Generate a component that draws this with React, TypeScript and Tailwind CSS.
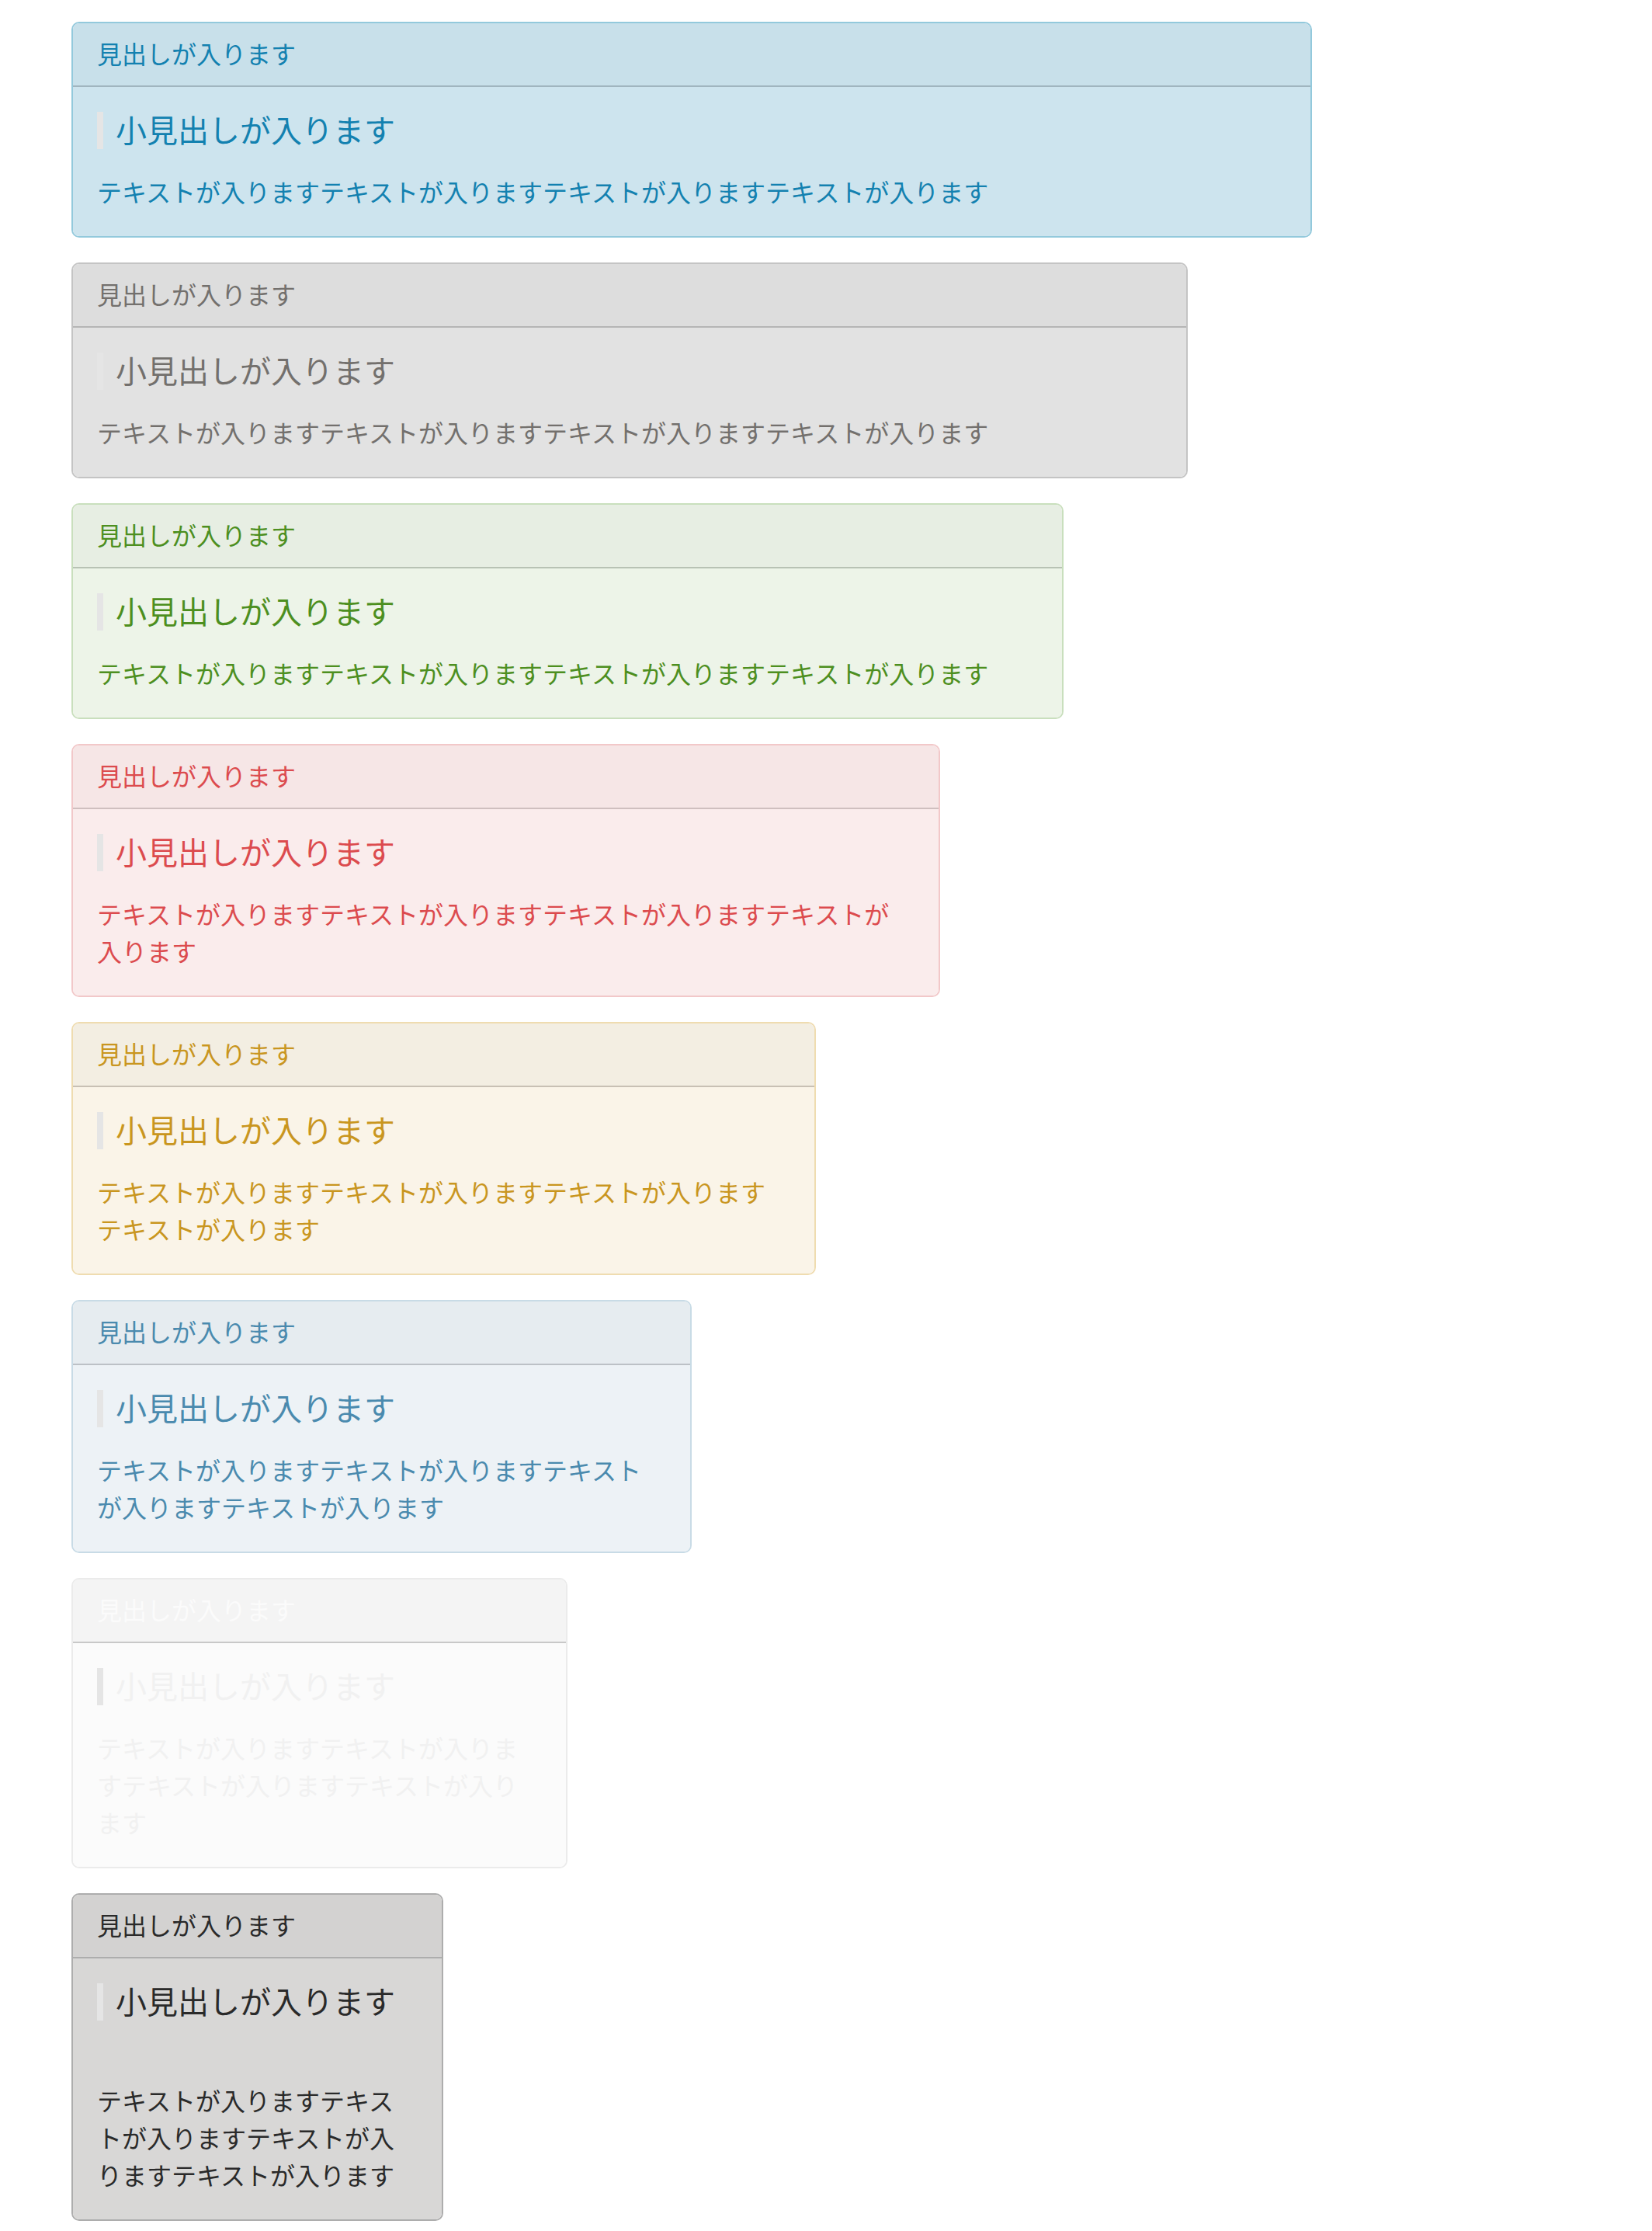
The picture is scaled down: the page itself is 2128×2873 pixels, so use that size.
import React from 'react'

type Panel = {
  width: string
  border: string
  headerBg: string
  bodyBg: string
  divider: string
  text: string
  headText?: string
  gap: string
}

const panels: Panel[] = [
  { width: 'w-[1598px]', border: 'border-[#93c9dc]', headerBg: 'bg-[#c8e0ea]', bodyBg: 'bg-[#cde4ee]', divider: 'border-[#a0b5bf]', text: 'text-[#1381b0]', gap: 'mt-[30px]' },
  { width: 'w-[1438px]', border: 'border-[#c4c4c4]', headerBg: 'bg-[#dddddd]', bodyBg: 'bg-[#e2e2e2]', divider: 'border-[#b5b5b5]', text: 'text-[#73706d]', gap: 'mt-[30px]' },
  { width: 'w-[1278px]', border: 'border-[#c9dfbd]', headerBg: 'bg-[#e7eee3]', bodyBg: 'bg-[#edf4e8]', divider: 'border-[#b8c2b4]', text: 'text-[#4d8f1f]', gap: 'mt-[30px]' },
  { width: 'w-[1119px]', border: 'border-[#f2c8c9]', headerBg: 'bg-[#f6e6e6]', bodyBg: 'bg-[#faecec]', divider: 'border-[#cfbfbf]', text: 'text-[#dc4b4e]', gap: 'mt-[30px]' },
  { width: 'w-[959px]', border: 'border-[#efdcb0]', headerBg: 'bg-[#f3eee2]', bodyBg: 'bg-[#faf4e8]', divider: 'border-[#c8c0b4]', text: 'text-[#c9961f]', gap: 'mt-[30px]' },
  { width: 'w-[799px]', border: 'border-[#c8dbe6]', headerBg: 'bg-[#e6ecf0]', bodyBg: 'bg-[#edf2f6]', divider: 'border-[#bcc1c6]', text: 'text-[#4a8aae]', gap: 'mt-[30px]' },
  { width: 'w-[639px]', border: 'border-[#ebebeb]', headerBg: 'bg-[#f4f4f4]', bodyBg: 'bg-[#fbfbfb]', divider: 'border-[#c8c8c8]', text: 'text-[#f1f1f1]', headText: 'text-[#fbfbfb]', gap: 'mt-[30px]' },
  { width: 'w-[479px]', border: 'border-[#adadad]', headerBg: 'bg-[#d3d2d1]', bodyBg: 'bg-[#d8d7d6]', divider: 'border-[#adadad]', text: 'text-[#2a2a2a]', gap: 'mt-[78px]' },
]

const bodyText = 'テキストが入りますテキストが入りますテキストが入りますテキストが入ります'

function Box({ p }: { p: Panel }) {
  return (
    <div className={`${p.width} ${p.border} ${p.text} border-2 rounded-[10px] overflow-hidden`}>
      {/* header */}
      <div className={`${p.headerBg} ${p.divider} ${p.headText ?? ''} border-b-2 pl-[31px] pr-[33px] pt-[14px] pb-[18px] text-[32px] leading-[48px]`}>
        見出しが入ります
      </div>
      {/* body */}
      <div className={`${p.bodyBg} pl-[31px] pr-[33px] pt-8 pb-[34px]`}>
        <h3 className="border-l-8 border-[#e5e5e5] pl-4 pb-[4px] text-[40px] leading-[44px] font-normal">
          小見出しが入ります
        </h3>
        <p className={`${p.gap} text-[32px] leading-[48px]`}>{bodyText}</p>
      </div>
    </div>
  )
}

export default function App() {
  return (
    <div className="min-h-screen bg-white pl-[92px] pt-[28px] pb-4 font-['Noto_Sans_CJK_JP','Noto_Sans',sans-serif]">
      <div className="flex flex-col items-start gap-8">
        {panels.map((p, i) => (
          <Box key={i} p={p} />
        ))}
      </div>
    </div>
  )
}
